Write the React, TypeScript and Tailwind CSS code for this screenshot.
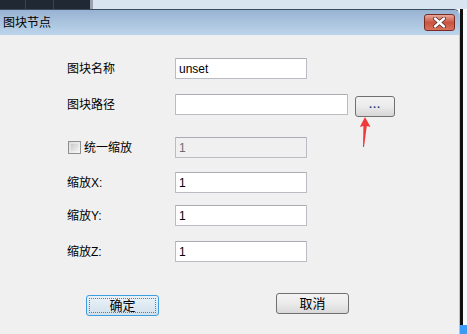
import { useState } from 'react';

const font = { fontFamily: '"Liberation Sans", "Noto Sans CJK SC", sans-serif' };

function TextBox({ value, width = 'w-[132px]', disabled = false }: { value: string; width?: string; disabled?: boolean }) {
  return (
    <div
      className={`${width} h-[21px] border border-[#b9bcc1] border-t-[#a9acb1] rounded-[1px] flex items-center pl-[3px] text-[12px] ${
        disabled ? 'bg-[#f0f0f0] text-[#6d6d6d]' : 'bg-white text-black'
      }`}
    >
      {value}
    </div>
  );
}

function Label({ children }: { children: React.ReactNode }) {
  return <div className="w-[108px] text-[12px] text-black leading-none">{children}</div>;
}

export default function App() {
  const [uniform, setUniform] = useState(false);
  return (
    <div className="w-[467px] h-[334px] overflow-hidden bg-white flex flex-col" style={font}>
      {/* background strip above the dialog */}
      <div className="h-[9px] flex shrink-0">
        <div className="w-[90px] bg-[#1f2833] flex">
          <div className="w-[26px] border-r border-[#3a4350]" />
          <div className="w-[28px] border-r border-[#3a4350]" />
        </div>
        <div className="w-[3px] bg-[#9aa3ad]" />
        <div className="flex-1 bg-[#d8e4f0]" />
      </div>

      <div className="flex-1 flex">
        {/* dialog */}
        <div className="w-[460px] flex flex-col border-t border-[#3b4a5c] rounded-tr-[6px] overflow-hidden border-r border-r-[#a9c6e4]">
          <div className="h-[25px] shrink-0 bg-gradient-to-b from-[#98b3d2] to-[#bdd5eb] flex items-center justify-between pl-[3px] pr-[4px]">
            <span className="text-[12px] text-black leading-none">图块节点</span>
            <div className="w-[31px] h-[17px] rounded-[3px] border border-[#7a2a22] bg-gradient-to-b from-[#e6a89c] via-[#c95440] to-[#d9735c] flex items-center justify-center">
              <svg width="13" height="11" viewBox="0 0 13 11">
                <path d="M2 1.5 L11 9.5 M11 1.5 L2 9.5" stroke="#5a2a24" strokeWidth="4" strokeLinecap="round" />
                <path d="M2 1.5 L11 9.5 M11 1.5 L2 9.5" stroke="#ffffff" strokeWidth="2.4" strokeLinecap="round" />
              </svg>
            </div>
          </div>

          <div className="flex-1 bg-[#f0f0f0] pl-[67px] relative">
            <div className="mt-[23px] flex items-center">
              <Label>图块名称</Label>
              <TextBox value="unset" />
            </div>

            <div className="mt-[15px] flex items-start">
              <div className="h-[21px] flex items-center">
                <Label>图块路径</Label>
              </div>
              <TextBox value="" width="w-[173px]" />
              <button className="ml-[7px] mt-[2px] w-[40px] h-[21px] rounded-[3px] border border-[#707070] bg-gradient-to-b from-[#f3f3f3] via-[#ebebeb] to-[#d6d6d6] flex items-center justify-center">
                <span className="text-[#1d3f7a] text-[11px] leading-none tracking-[1px] font-bold -mt-[4px]">...</span>
              </button>
            </div>

            <div className="mt-[20px] flex items-center">
              <div className="w-[108px] flex items-center">
                <button
                  onClick={() => setUniform(!uniform)}
                  className="ml-[1px] w-[13px] h-[13px] border border-[#8e8f8f] bg-gradient-to-br from-[#dcdcdc] to-[#f6f6f6] p-[2px]"
                >
                  <div className="w-full h-full bg-gradient-to-br from-[#cbcbcb] to-[#eeeeee]" />
                </button>
                <span className="ml-[3px] text-[12px] leading-none">统一缩放</span>
              </div>
              <TextBox value="1" disabled />
            </div>

            <div className="mt-[14px] flex items-center">
              <Label>缩放X:</Label>
              <TextBox value="1" />
            </div>

            <div className="mt-[12px] flex items-center">
              <Label>缩放Y:</Label>
              <TextBox value="1" />
            </div>

            <div className="mt-[15px] flex items-center">
              <Label>缩放Z:</Label>
              <TextBox value="1" />
            </div>

            <div className="mt-[31px] flex items-start">
              <button className="ml-[19px] mt-[2px] w-[73px] h-[21px] rounded-[3px] border border-[#3c9de0] bg-gradient-to-b from-[#eaf2f8] to-[#d3e1ec] p-[2px]">
                <div className="w-full h-full border border-dotted border-[#777] flex items-center justify-center text-[13px] leading-none">
                  确定
                </div>
              </button>
              <button className="ml-[117px] w-[73px] h-[21px] rounded-[3px] border border-[#707070] bg-gradient-to-b from-[#f3f3f3] via-[#ebebeb] to-[#d8d8d8] flex items-center justify-center text-[13px] leading-none">
                取消
              </button>
            </div>

            {/* red annotation arrow */}
            <svg className="absolute left-[357px] top-[81px]" width="16" height="32" viewBox="0 0 16 32">
              <path d="M8 1 L13.5 11 L9.8 10 L7 31 L6 31 L6.4 10 L2.8 11 Z" fill="#f03a3a" />
            </svg>
          </div>
        </div>

        {/* desktop behind, right side */}
        <div className="flex-1 flex flex-col">
          <div className="flex-1 flex">
            <div className="w-[3px] bg-[#111]" />
            <div className="flex-1 bg-[#f7fafc]" />
          </div>
          <div className="h-[9px] bg-[#3d9bf5]" />
        </div>
      </div>
    </div>
  );
}
